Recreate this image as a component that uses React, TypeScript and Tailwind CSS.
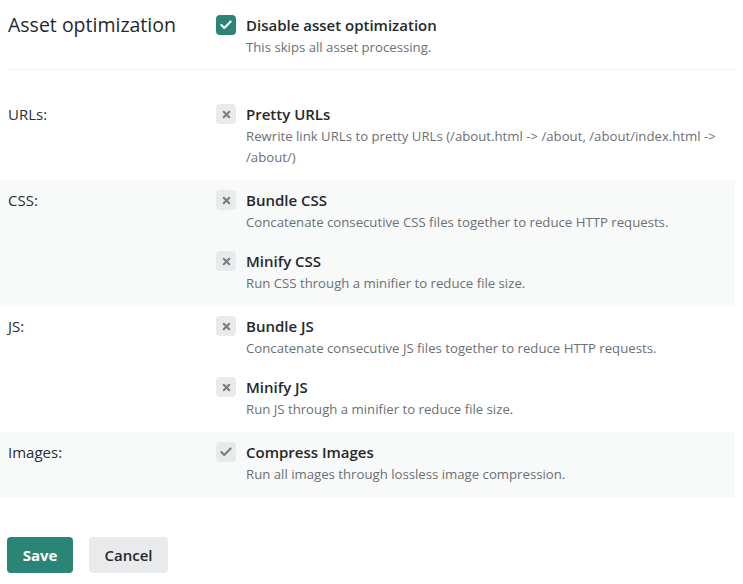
import {Check, X} from 'lucide-react'

type Opt = {title: string; desc: string; checked?: boolean}
type Group = {label: string; shaded?: boolean; options: Opt[]}

const groups: Group[] = [
  {
    label: 'URLs:',
    options: [
      {
        title: 'Pretty URLs',
        desc: 'Rewrite link URLs to pretty URLs (/about.html -> /about, /about/index.html -> /about/)',
      },
    ],
  },
  {
    label: 'CSS:',
    shaded: true,
    options: [
      {title: 'Bundle CSS', desc: 'Concatenate consecutive CSS files together to reduce HTTP requests.'},
      {title: 'Minify CSS', desc: 'Run CSS through a minifier to reduce file size.'},
    ],
  },
  {
    label: 'JS:',
    options: [
      {title: 'Bundle JS', desc: 'Concatenate consecutive JS files together to reduce HTTP requests.'},
      {title: 'Minify JS', desc: 'Run JS through a minifier to reduce file size.'},
    ],
  },
  {
    label: 'Images:',
    shaded: true,
    options: [{title: 'Compress Images', desc: 'Run all images through lossless image compression.', checked: true}],
  },
]

function Box({checked}: {checked?: boolean}) {
  return (
    <span className="flex h-5 w-5 shrink-0 items-center justify-center rounded bg-[#e9eaec] text-[#7a7d80]">
      {checked ? <Check size={14} strokeWidth={3.5} /> : <X size={11} strokeWidth={4.5} />}
    </span>
  )
}

function Option({opt}: {opt: Opt}) {
  return (
    <div className="flex gap-2.5">
      <Box checked={opt.checked} />
      <div className="min-w-0">
        <div className="text-[15px] leading-[20px] font-semibold text-[#25282c]">{opt.title}</div>
        <p className="mt-[2px] text-[13.2px] leading-[21px] text-[#6b7075]">{opt.desc}</p>
      </div>
    </div>
  )
}

export default function App() {
  return (
    <div className="min-h-screen bg-white pr-2 font-['Open_Sans',sans-serif] text-[#2a2d31]">
      <div className="flex px-2 pt-[13px] pb-[11px]">
        <h1 className="w-[208px] shrink-0 text-[19.5px] leading-[24px] font-normal text-[#25282c]">
          Asset optimization
        </h1>
        <div className="flex gap-2.5 pt-[2px]">
          <span className="flex h-5 w-5 shrink-0 items-center justify-center rounded bg-[#2b8577] text-white">
            <Check size={14} strokeWidth={3.5} />
          </span>
          <div>
            <div className="text-[15px] leading-[20px] font-semibold text-[#25282c]">Disable asset optimization</div>
            <p className="mt-[2px] text-[13.2px] leading-[21px] text-[#6b7075]">This skips all asset processing.</p>
          </div>
        </div>
      </div>
      <div className="ml-2 border-t border-[#f1f2f3]" />

      <div className="mt-6">
        {groups.map((g) => (
          <div key={g.label} className={`flex px-2 pt-2.5 pb-3 ${g.shaded ? 'bg-[#f8f9f9]' : ''}`}>
            <div className="w-[208px] shrink-0 text-[15px] leading-[20px] text-[#2a2d31]">{g.label}</div>
            <div className="flex min-w-0 flex-col gap-[18px]">
              {g.options.map((o) => (
                <Option key={o.title} opt={o} />
              ))}
            </div>
          </div>
        ))}
      </div>

      <div className="mt-10 flex gap-4 px-[7px]">
        <button className="h-9 w-[66px] rounded bg-[#2b8577] text-[15px] font-bold text-white">Save</button>
        <button className="h-9 w-[79px] rounded bg-[#e9eaec] text-[15px] font-semibold text-[#25282c]">
          Cancel
        </button>
      </div>
    </div>
  )
}
